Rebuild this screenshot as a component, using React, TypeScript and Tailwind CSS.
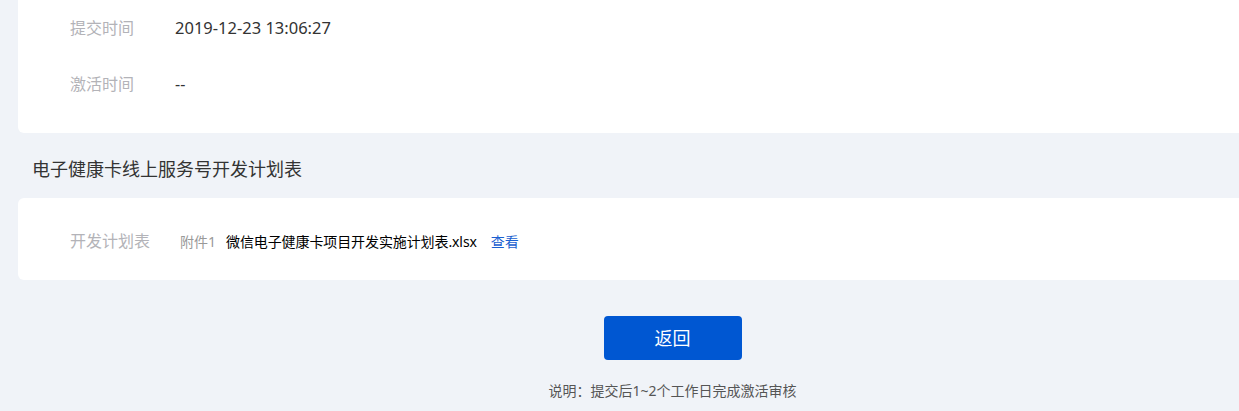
export default function App() {
  const font = { fontFamily: '"Noto Sans", "Noto Sans CJK SC", sans-serif' };
  return (
    <div className="min-h-[411px] overflow-hidden bg-[#f0f3f8]" style={font}>
      <div className="w-[1345px] px-[18px]">
        <div className="rounded-b-md bg-white pb-[21px]">
          <div className="flex h-14 items-center text-[16px]">
            <span className="w-[157px] pl-[52px] text-[#b3b3b8]">提交时间</span>
            <span className="text-[16.5px] text-[#333]">2019-12-23 13:06:27</span>
          </div>
          <div className="flex h-14 items-center text-[16px]">
            <span className="w-[157px] pl-[52px] text-[#b3b3b8]">激活时间</span>
            <span className="text-[#333]">--</span>
          </div>
        </div>

        <h2 className="pl-[14px] pt-[25px] pb-[18px] text-[18px] leading-[22px] font-normal text-[#333]">
          电子健康卡线上服务号开发计划表
        </h2>

        <div className="rounded-md bg-white pt-[23px] pb-[19px]">
          <div className="flex h-10 items-center">
            <span className="w-[162px] pl-[52px] text-[16px] text-[#b3b3b8]">开发计划表</span>
            <span className="mr-[10px] text-[14px] text-[#999]">附件1</span>
            <span className="mr-[14px] text-[14px] tracking-[-0.1px] text-black">
              微信电子健康卡项目开发实施计划表.xlsx
            </span>
            <a className="cursor-pointer text-[14px] text-[#1a5fd0]">查看</a>
          </div>
        </div>

        <div className="flex flex-col items-center">
          <button className="mt-9 h-[44px] w-[138px] rounded-[4px] bg-[#0057d2] text-[18px] text-white">
            返回
          </button>
          <p className="mt-[22px] text-[14px] leading-[18px] text-[#555]">
            说明：提交后1~2个工作日完成激活审核
          </p>
        </div>
      </div>
    </div>
  );
}
